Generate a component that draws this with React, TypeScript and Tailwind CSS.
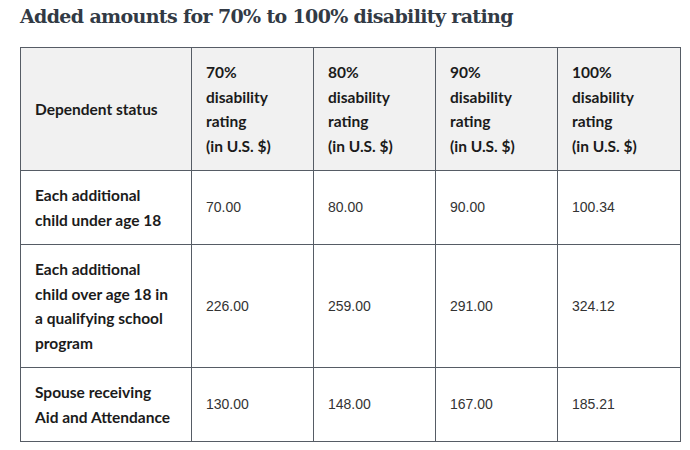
const HEADERS = ["70%", "80%", "90%", "100%"];

const ROWS = [
  { label: "Each additional child under age 18", values: ["70.00", "80.00", "90.00", "100.34"] },
  {
    label: "Each additional child over age 18 in a qualifying school program",
    values: ["226.00", "259.00", "291.00", "324.12"],
  },
  { label: "Spouse receiving Aid and Attendance", values: ["130.00", "148.00", "167.00", "185.21"] },
];

const thClass =
  "border border-[#565c65] pl-[14px] pr-[16px] py-[12px] text-left align-middle font-['Lato',sans-serif] font-bold text-[15.5px] leading-[24.5px]";

export default function App() {
  return (
    <div className="w-[690px] h-[450px] bg-white pl-[20px] pt-[2px]">
      <h2 className="font-['DejaVu_Serif',serif] font-bold text-[19px] leading-[28px] tracking-[-0.65px] text-[#323a45]">
        Added amounts for 70% to 100% disability rating
      </h2>
      <table className="mt-[17px] w-[660px] table-fixed border-collapse border border-[#565c65] text-[#1b1b1b]">
        <colgroup>
          <col className="w-[171px]" />
          <col className="w-[122px]" />
          <col className="w-[122px]" />
          <col className="w-[122px]" />
          <col className="w-[123px]" />
        </colgroup>
        <thead>
          <tr className="bg-[#f1f1f1]">
            <th className={thClass}>Dependent status</th>
            {HEADERS.map((h) => (
              <th key={h} className={thClass}>
                {h}
                <br />
                disability
                <br />
                rating
                <br />
                (in U.S. $)
              </th>
            ))}
          </tr>
        </thead>
        <tbody>
          {ROWS.map((row) => (
            <tr key={row.label}>
              <th className={thClass}>{row.label}</th>
              {row.values.map((v, i) => (
                <td
                  key={i}
                  className="border border-[#565c65] px-[14px] py-[12px] align-middle font-['Liberation_Sans',sans-serif] text-[14px] leading-[24.5px] text-[#333333]"
                >
                  {v}
                </td>
              ))}
            </tr>
          ))}
        </tbody>
      </table>
    </div>
  );
}
